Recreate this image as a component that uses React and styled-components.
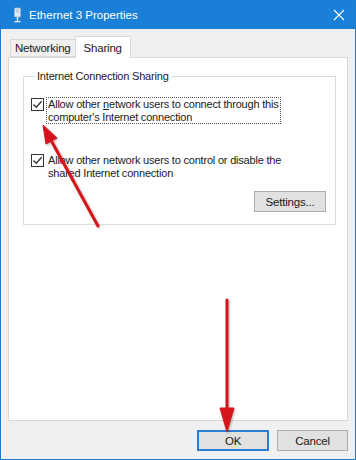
import React from "react";
import styled, { createGlobalStyle } from "styled-components";

const Global = createGlobalStyle`
  html, body { margin: 0; padding: 0; background: #ffffff; }
  body { font-family: "Liberation Sans", Arial, sans-serif; }
`;

const Window = styled.div`
  position: relative;
  width: 356px;
  height: 460px;
  box-sizing: border-box;
  border: 1px solid #1a7bd3;
  border-top: none;
  background: #f0f0f0;
  display: flex;
  flex-direction: column;
  font-size: 11px;
  letter-spacing: -0.2px;
  color: #1a1a1a;
  overflow: hidden;
`;

const TitleBar = styled.div`
  height: 30px;
  margin: 0 -1px;
  background: #1a7fd6;
  display: flex;
  align-items: center;
  padding: 0 11px 0 13px;
  color: #ffffff;
  font-size: 11.5px;
  letter-spacing: 0;
`;

const TitleText = styled.span`
  margin-left: 7px;
  flex: 1;
`;

const Body = styled.div`
  flex: 1;
  display: flex;
  flex-direction: column;
  padding: 7px 7px 8px 7px;
`;

const TabRow = styled.div`
  display: flex;
  align-items: flex-end;
  height: 21px;
  padding-left: 2px;
  position: relative;
  z-index: 1;
`;

const Tab = styled.div`
  box-sizing: border-box;
  height: ${(p) => (p.$active ? "22px" : "18px")};
  padding: 0 ${(p) => (p.$active ? "8px" : "4px")};
  margin-bottom: ${(p) => (p.$active ? "-1px" : "0")};
  background: ${(p) => (p.$active ? "#ffffff" : "#f0f0f0")};
  border: 1px solid #d9d9d9;
  border-bottom: ${(p) => (p.$active ? "none" : "1px solid #d9d9d9")};
  margin-right: ${(p) => (p.$active ? "0" : "-1px")};
  display: flex;
  align-items: center;
  font-size: 11.5px;
  color: #1a1a1a;
`;

const Panel = styled.div`
  height: 364px;
  box-sizing: border-box;
  background: #ffffff;
  border: 1px solid #d9d9d9;
  padding: 12px 11px 0 14px;
`;

const Group = styled.fieldset`
  margin: 0;
  padding: 10px 9px 0 7px;
  border: 1px solid #dcdcdc;
  height: 155px;
  box-sizing: border-box;
`;

const Legend = styled.legend`
  padding: 0 2px;
  margin-left: 4px;
  font-size: 11px;
  color: #1a1a1a;
`;

const CheckRow = styled.label`
  display: flex;
  align-items: flex-start;
  margin-top: ${(p) => p.$mt || 0}px;
`;

const Box = styled.span`
  width: 13px;
  height: 13px;
  box-sizing: border-box;
  border: 1px solid #333333;
  background: #ffffff;
  flex: none;
  margin-top: 1px;
  display: flex;
  align-items: center;
  justify-content: center;
`;

const Label = styled.span`
  margin-left: 2px;
  line-height: 12.5px;
  padding: 0 1px;
  white-space: nowrap;
  border: 1px dotted ${(p) => (p.$focus ? "#555555" : "transparent")};
  width: 231px;
`;

const ButtonRight = styled.div`
  display: flex;
  justify-content: flex-end;
  margin-top: ${(p) => p.$mt || 0}px;
`;

const Button = styled.div`
  box-sizing: border-box;
  width: ${(p) => p.$w || 72}px;
  height: 21px;
  background: #e1e1e1;
  border: ${(p) => (p.$default ? "2px solid #2a7fd4" : "1px solid #adadad")};
  display: flex;
  align-items: center;
  justify-content: center;
  font-size: 11.5px;
  color: #1a1a1a;
`;

const Footer = styled.div`
  display: flex;
  justify-content: flex-end;
  gap: 8px;
  margin-top: 9px;
`;

const Overlay = styled.svg`
  position: absolute;
  left: 0;
  top: 0;
  pointer-events: none;
`;

const Check = () => (
  <svg width="11" height="11" viewBox="0 0 11 11">
    <path d="M1.5 5.5 L4.3 8.3 L9.6 2.2" fill="none" stroke="#333" strokeWidth="1.3" />
  </svg>
);

export default function App() {
  return (
    <>
      <Global />
      <Window>
        <TitleBar>
          <svg width="9" height="16" viewBox="0 0 9 16">
            <rect x="1.5" y="1" width="6" height="9" rx="1" fill="#dfe9f3" stroke="#9fb7cf" strokeWidth="0.8" />
            <rect x="3" y="2.5" width="3" height="3" fill="#b9cde0" />
            <rect x="3.8" y="10" width="1.4" height="4" fill="#e8f0f8" />
            <rect x="1.5" y="14" width="6" height="1.3" fill="#e8f0f8" />
          </svg>
          <TitleText>Ethernet 3 Properties</TitleText>
          <svg width="12" height="12" viewBox="0 0 12 12">
            <path d="M1 1 L11 11 M11 1 L1 11" stroke="#ffffff" strokeWidth="1.1" />
          </svg>
        </TitleBar>
        <Body>
          <TabRow>
            <Tab>Networking</Tab>
            <Tab $active>Sharing</Tab>
          </TabRow>
          <Panel>
            <Group>
              <Legend>Internet Connection Sharing</Legend>
              <CheckRow $mt={5}>
                <Box><Check /></Box>
                <Label $focus>
                  Allow other <u>n</u>etwork users to connect through this<br />
                  computer's Internet connection
                </Label>
              </CheckRow>
              <CheckRow $mt={29}>
                <Box><Check /></Box>
                <Label>
                  Allow other network users to control or disable the<br />
                  shared Internet connection
                </Label>
              </CheckRow>
              <ButtonRight $mt={11}>
                <Button>Settings...</Button>
              </ButtonRight>
            </Group>
          </Panel>
          <Footer>
            <Button $default>OK</Button>
            <Button $w={71}>Cancel</Button>
          </Footer>
        </Body>
        <Overlay width="356" height="460" viewBox="0 0 356 460">
          <defs>
            <filter id="sh" x="-20%" y="-20%" width="140%" height="140%">
              <feDropShadow dx="1" dy="1" stdDeviation="1" floodColor="#000" floodOpacity="0.3" />
            </filter>
          </defs>
          <g filter="url(#sh)" fill="#d4141c" stroke="#d4141c">
            <line x1="97" y1="226" x2="51" y2="142" strokeWidth="3" strokeLinecap="round" />
            <polygon points="42,125 56,138 45,144" strokeWidth="1" />
            <line x1="226" y1="300" x2="226" y2="412" strokeWidth="3" strokeLinecap="round" />
            <polygon points="226,432 219,408 233,408" strokeWidth="1" />
          </g>
        </Overlay>
      </Window>
    </>
  );
}
